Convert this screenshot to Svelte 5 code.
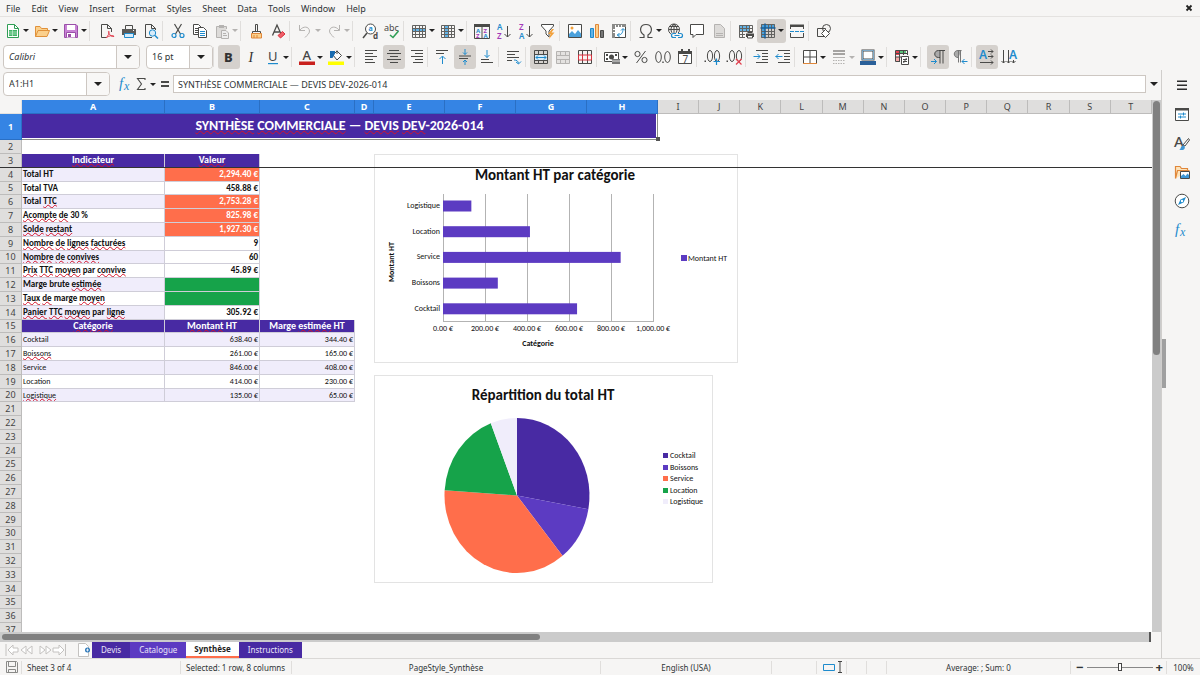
<script>
  const K = '#4a4a48';
  const B = '#1e8bcd';
  const s = (d, c = K, w = 1, f = 'none') => `<path d="${d}" fill="${f}" stroke="${c}" stroke-width="${w}"/>`;
  const f = (d, c = K) => `<path d="${d}" fill="${c}"/>`;
  const t = (x, y, str, size, c = K, extra = '') =>
    `<text x="${x}" y="${y}" font-size="${size}" fill="${c}" ${extra}>${str}</text>`;
  const grid = (c = '#636361') => s('M1.500 2.500H14.500V14.500H1.500ZM1.500 5.500H14.500M1.500 8.500H14.500M1.500 11.500H14.500M4.500 2.500V14.500M8.500 2.500V14.500M11.500 2.500V14.500', c);
  const fx = t(1, 12, 'f', 15, B, 'font-family="Liberation Serif" font-style="italic"') + t(6, 14, 'x', 12, B, 'font-family="Liberation Serif" font-style="italic"');

  const icons = {
    new: s('M2.500 1.500H9.500L13.500 5.500V14.500H2.500Z', '#2f9e55', 1, '#fff') + s('M9.500 1.500V5.500H13.500', '#2f9e55') + f('M4 7H12V13H4Z', '#3fb265') + s('M4 9H12M4 11H12M7.500 7V13', '#c9efd5', 0.700),
    open: s('M1.500 13.500V3.500H6L7.500 5.500H13.500V7.500M1.500 13.500L4 7.500H15.500L13 13.500Z', '#e0913a', 1, '#fbd08c'),
    save: s('M1.500 1.500H13L14.500 3V14.500H1.500Z', '#9a4fa8', 1, '#c882d5') + f('M4 2H12V7H4Z', '#fff') + s('M3.500 14.500V9.500H12.500V14.500', '#9a4fa8', 1, '#fff') + f('M5 11H8V14H5Z', '#9a4fa8'),
    pdf: s('M12.500 9V5.500L8.500 1.500H2.500V14.500H8M8.500 1.500V5.500H12.500') + s('M7 15C9 13 10.500 10 10 8.500C9.500 7.500 9 9 10 10.500C11 12.500 13 14 15 13.500C15 12 10 12.500 7.500 14.500', '#e2404f'),
    print: s('M4.500 6V2.500H11.500V6') + f('M1 6H15V12H12V10H4V12H1Z', '#5a5a58') + s('M3.500 10.500H12.500V14.500H3.500Z', B, 1, '#d8ecfa') + f('M12 7H13V8H12Z', '#fff'),
    preview: s('M12.500 7V5.500L8.500 1.500H2.500V14.500H9M8.500 1.500V5.500H12.500') + `<circle cx="9.500" cy="10" r="3.200" fill="#d8ecfa" stroke="${B}"/>` + s('M12 12.500L15 15.500', B, 1.500),
    cut: s('M4.500 1L10.500 11M11.500 1L5.500 11', K, 1.200) + `<circle cx="4" cy="12.500" r="2" fill="none" stroke="${B}" stroke-width="1.200"/><circle cx="12" cy="12.500" r="2" fill="none" stroke="${B}" stroke-width="1.200"/>`,
    copy: s('M1.500 1.500H6.500L9.500 4.500V11.500H1.500ZM3 5.500H8M3 7.500H8M3 9.500H8', K, 1, '#fff') + s('M6.500 4.500H11.500L14.500 7.500V14.500H6.500Z', K, 1, '#fff') + s('M8 8.500H13M8 10.500H13M8 12.500H13', B),
    paste: s('M9 14.500H2.500V3.500H12.500V6', '#b5b3b1', 1, '#dddbd9') + f('M5 2H10V5H5Z', '#b5b3b1') + s('M7.500 7.500H12L14.500 10V15.500H7.500Z', '#b5b3b1', 1, '#eee') + s('M9 10.500H12M9 12.500H13', '#b5b3b1'),
    clone: s('M7.500 8V1.500H9.500V8M4.500 10.500V8.500H12.500V10.500') + s('M3.500 10.500H13.500V15H3.500ZM6 12V15M9 12V15', '#e0873a', 1, '#fbd08c'),
    clear: s('M2.500 12.500L7 2L11.500 12M4 9H9.500', K, 1.300) + s('M8 12.500L12.500 8.500L15 11L10.500 15Z', '#d8313e', 1, '#f0606a'),
    undo: s('M2.500 2V7.500H8M3 7C6 3 12 3 12.500 8C12.500 11 10 12 8 14.500', '#b5b3b1'),
    redo: s('M13.500 2V7.500H8M13 7C10 3 4 3 3.500 8C3.500 11 6 12 8 14.500', '#b5b3b1'),
    find: `<circle cx="8.500" cy="6" r="5" fill="#fff" stroke="${K}"/>` + s('M5 10L1 15', K, 1.500) + t(6.500, 8, 'a', 7, B, 'font-weight="700"') + t(11, 15.500, 'd', 8, K, 'font-weight="700"'),
    spell: t(0, 7.500, 'abc', 9, K) + s('M6 12L9 14.500L14.500 8', '#2f9e55', 1.600),
    row: f('M1 5H15V9H1Z', '#63b3e6') + grid(),
    col: f('M4 2H9V15H4Z', '#63b3e6') + grid(),
    sort: s('M0.500 1.500H15.500V15.500H0.500ZM8 1.500V15.500') + f('M0 1H16V4H0Z') + t(2, 9.500, 'A', 6, B, 'font-weight="700"') + t(2, 15, 'Z', 6, '#a33ab8', 'font-weight="700"') + t(9.500, 9.500, 'Z', 6, '#a33ab8', 'font-weight="700"') + t(9.500, 15, 'A', 6, B, 'font-weight="700"'),
    asc: t(1, 7, 'A', 8, B, 'font-weight="600"') + t(1, 15.500, 'Z', 8, '#a33ab8', 'font-weight="600"') + s('M11.500 3V14M8.500 11L11.500 14L14.500 11'),
    desc: t(1, 7, 'Z', 8, '#a33ab8', 'font-weight="600"') + t(1, 15.500, 'A', 8, B, 'font-weight="600"') + s('M11.500 3V14M8.500 11L11.500 14L14.500 11'),
    filter: s('M1.500 1.500H13.500V3L9 8V14L6 11V8L1.500 3Z', K, 1, '#fff') + f('M12 6L8 11H10.500L9 16L14.500 9.500H11.500L14 6Z', '#f2a13c'),
    image: s('M1.500 1.500H14.500V14.500H1.500Z', K, 1, '#fff') + f('M2 14V11L5 8L8 11L11 7L14 10.500V14Z', '#4ba1dc') + `<circle cx="5" cy="5" r="1.500" fill="#f2a13c"/>`,
    chart: s('M1.500 5.500H4.500V14.500H1.500Z', B, 1, '#63b3e6') + s('M6.500 1.500H9.500V14.500H6.500Z', '#e0873a', 1, '#fbd08c') + s('M11.500 7.500H14.500V14.500H11.500Z', K, 1, '#777'),
    pivot: s('M1.500 1.500H14.500V14.500H1.500Z', K, 1, '#fff') + f('M1 1H15V4H1ZM1 4H4V15H1Z', '#8a8a88') + s('M4.500 2V4M7.500 2V4M10.500 2V4M2 6.500H4M2 9.500H4', '#fff') + s('M6 12C10 12.500 12 10 12 6M10 7.500L12 5.500L14 7.500M8.500 10L6.500 12L8.500 14', B),
    omega: s('M1.500 14.500H6V12C0.500 8.500 2 1.500 8 1.500S15.500 8.500 10 12V14.500H14.500', K, 1.200),
    link: `<circle cx="7" cy="6.500" r="5.500" fill="none" stroke="${K}"/>` + s('M7 1C3 4 3 9 7 12C11 9 11 4 7 1ZM1.500 6.500H12.500M2.500 3.500H11.500M7 1V12') + f('M4 10H16V16H4Z', '#f6f5f4') + s('M9 10.500H6.500Q4.500 10.500 4.500 12.500T6.500 14.500H9M11 10.500H13.500Q15.500 10.500 15.500 12.500T13.500 14.500H11M7.500 12.500H12.500', B, 1.200),
    comment: s('M1.500 1.500H14.500V11.500H7L4 14.500V11.500H1.500Z', K, 1, '#fff'),
    foot: s('M3.500 1.500H9.500L13.500 5.500V14.500H3.500Z', '#b5b3b1', 1, '#dddbd9') + s('M5 10.500H12M5 12.500H12', '#b5b3b1'),
    printarea: f('M1 2H11V8H1Z', '#63b3e6') + grid() + f('M7 9H16V16H7Z', '#f6f5f4') + f('M8 10.500H16V14H8ZM9.500 8.500H14.500V10H9.500Z') + s('M9.500 12.500H14.500V15H9.500Z', K, 1, '#fff'),
    freeze: f('M1 1H5V15H1ZM1 1H15V5H1Z', '#4ba1dc') + s('M1.500 1.500H14.500V14.500H1.500ZM1.500 8.500H14.500M1.500 11.500H14.500M8.500 1.500V14.500M11.500 1.500V14.500', '#636361') + s('M0.500 5H15.500M5 0.500V15.500', '#1a5f96', 1.500),
    split: s('M1.500 6V2.500H14.500V6M1.500 10V14.500H14.500V10') + f('M1 1.500H15V4H1Z') + `<path d="M1 8.500H15" stroke="${B}" stroke-dasharray="4 1"/>`,
    shapes: s('M1.500 5.500H9.500V13.500H1.500Z') + `<circle cx="10.500" cy="5.500" r="4" fill="none" stroke="${K}"/>` + s('M9.500 6.500L13.500 10.500L9.500 14.500L5.500 10.500Z', K, 1, '#fff'),
    bold: t(3, 13, 'B', 13, '#333', 'font-weight="800"'),
    italic: t(5.500, 13, 'I', 14, '#333', 'font-family="Liberation Serif" font-style="italic"'),
    under: t(3, 12, 'U', 13, '#444') + f('M3 14H13V15.200H3Z', B),
    color: t(3.500, 11, 'A', 13, '#444', 'font-weight="500"') + f('M0 12.500H16V16H0Z', '#c9211e'),
    hilite: f('M0 12.500H16V16H0Z', '#ffff00') + s('M5 6L9 2L13.500 6.500L9 11Z', K, 1, '#fff') + s('M9 5V1.500') + f('M2 2H7V4.500L4.500 9H2Z', '#1b6cb0'),
    left: s('M1 1.500H13M1 4.500H9M1 7.500H13M1 10.500H9M1 13.500H11'),
    center: s('M3 1.500H13M1 4.500H15M4 7.500H12M1 10.500H15M4 13.500H12'),
    right: s('M3 1.500H15M7 4.500H15M3 7.500H15M7 10.500H15M5 13.500H15'),
    top: s('M1 1.500H13M1 4.500H9') + s('M7.500 15V7.500M4.500 10L7.500 7L10.500 10', B),
    middle: s('M2 7H14M2 9.500H11') + s('M8 0V5.500M6 3.500L8 5.500L10 3.500M8 16V11M6 13L8 11L10 13', B),
    bottom: s('M2 10.500H10M2 13.500H14') + s('M8 1V8.500M5.500 6L8 8.500L10.500 6', B),
    wrap: s('M1 2.500H13M1 5.500H9M1 8.500H13M1 11.500H6') + s('M8 11C11 11 12 12 12.500 14.500M10 13L12.500 15L15 12.500', B),
    merge: f('M1 6H15V11H1Z', '#d7ecfa') + s('M1.500 1.500H14.500V14.500H1.500ZM1.500 5.500H14.500M1.500 11.500H14.500M5.500 1.500V5.500M10.500 1.500V5.500M5.500 11.500V14.500M10.500 11.500V14.500') + s('M3 8.500H13M5 6.500L3 8.500L5 10.500M11 6.500L13 8.500L11 10.500', B),
    mergeoff: s('M1.500 2.500H14.500V14.500H1.500ZM1.500 6.500H14.500M1.500 10.500H14.500M5.500 2.500V6.500M10.500 2.500V6.500M5.500 10.500V14.500M10.500 10.500V14.500', '#b5b3b1', 1, '#e4e2e0'),
    unmerge: s('M1.500 1.500H14.500V14.500H1.500ZM5.500 1.500V6M10.500 1.500V6M5.500 11V14.500M10.500 11V14.500') + s('M1.500 6H14.500V11H1.500ZM5.500 6V11M10.500 6V11', '#d8313e'),
    currency: s('M0.500 3.500H14.500V12.500H0.500Z', K, 1, '#fff') + f('M2 5H4V7H2ZM11 5H13V7H11ZM2 9H4V11H2Z') + `<circle cx="7.500" cy="8" r="2.500" fill="${K}"/>` + f('M8 10H16V15H8Z', '#777') + s('M8 12H16', '#ddd'),
    percent: `<circle cx="4.500" cy="5" r="2.600" fill="none" stroke="${K}"/><circle cx="11.500" cy="11" r="2.600" fill="none" stroke="${K}"/>` + s('M12.500 2L3.500 14'),
    number: `<ellipse cx="3.500" cy="8" rx="2.800" ry="5.500" fill="none" stroke="${K}"/><ellipse cx="12.500" cy="8" rx="2.800" ry="5.500" fill="none" stroke="${K}"/>` + f('M7.300 12.500H8.700V14H7.300Z'),
    date: s('M1.500 2.500H14.500V14.500H1.500Z', K, 1, '#fff') + f('M1 2H15V5H1ZM4 0H6V4H4ZM11 0H13V4H11Z') + t(5.500, 13.500, '7', 10, K),
    decadd: `<ellipse cx="6" cy="7" rx="2.600" ry="5.500" fill="none" stroke="${K}"/><ellipse cx="13" cy="7" rx="2.600" ry="5.500" fill="none" stroke="${K}"/>` + f('M0.500 11.500H2V13H0.500Z') + s('M12.500 9.500V16M9.500 12.500H16', B, 1.200),
    decdel: `<ellipse cx="6" cy="7" rx="2.600" ry="5.500" fill="none" stroke="${K}"/><ellipse cx="13" cy="7" rx="2.600" ry="5.500" fill="none" stroke="${K}"/>` + f('M0.500 11.500H2V13H0.500Z') + s('M10 10L15.500 15.500M15.500 10L10 15.500', '#e2404f', 1.200),
    indent: s('M3 1.500H15M9 4.500H15M9 7.500H15M9 10.500H15M3 13.500H15') + s('M0.500 7.500H7M4.500 5L7 7.500L4.500 10', B),
    outdent: s('M3 1.500H15M9 4.500H15M9 7.500H15M9 10.500H15M3 13.500H15') + s('M0.500 7.500H7.500M3.500 5L1 7.500L3.500 10', B),
    border: s('M1.500 14V1.500H14.500V14M8 1.500V14M1.500 8H14.500', K, 1, '#fff') + s('M1 14.500H15', '#e0873a'),
    lines: s('M2 2H14M2 5H14', '#a5a3a1', 2) + s('M2 8.500H14', '#b5b3b1') + `<path d="M2 11.500H14M2 14.500H14" stroke="#b5b3b1" stroke-dasharray="1.500 1"/>`,
    bordercolor: s('M2.500 1.500H13.500V10.500H2.500Z', K, 2, '#fff') + s('M2.500 1.500H13.500V10.500H2.500Z', '#8cc3ea', 0.800) + f('M0 12H16V16H0Z', '#2a6099'),
    cond: f('M1 2H5V6H1Z', '#e2404f') + f('M5 2H12V5H5Z', '#5cc27a') + f('M1 8H5V12H1Z', '#f5a9a9') + s('M1.500 1.500H13.500V6M1.500 1.500V12.500H6M1.500 4.500H13.500M1.500 8H7M5.500 1.500V12M9.500 1.500V6') + s('M7.500 7.500H14.500V15.500H7.500Z', K, 1, '#fff') + s('M9 10.500H13M9 12.500H13M12.500 9L9.500 14'),
    ltr: f('M10 1.500H8.500C3 1.500 3 8.500 8.500 8.500H10Z', '#aaa') + s('M15 1.500H8.500C3.500 1.500 3.500 8.500 8.500 8.500H10M10 1.500V14.500M13 1.500V14.500') + s('M1 12.500H6.500M4 10L6.500 12.500L4 15', B),
    rtl: s('M9.500 1.500H6C1 1.500 1 8.500 6 8.500H6.500M6.500 1.500V13.500M8.500 1.500V13.500', '#777', 1, '#aaa') + s('M10 12.500H15.500M12.500 10L10 12.500L12.500 15', B),
    dirh: t(0, 10, 'A', 12, B, 'font-weight="600"') + s('M9 2.500H14M12 0.500L14 2.500L12 4.500M9 7.500H14M12 5.500L14 7.500L12 9.500M1 13.500H14M12 11.500L14 13.500L12 15.500'),
    dirv: t(8, 10, 'A', 12, B, 'font-weight="600"') + s('M2.500 1V14M0.500 12L2.500 14L4.500 12M7.500 1V14M5.500 12L7.500 14L9.500 12M12.500 11V14M10.500 12L12.500 14L14.500 12'),
    fx,
    sum: s('M11 4V2.500H3.500L7.500 8L3.500 13.500H11V12', K, 1.100),
    eq: f('M4 5H12V7H4ZM4 9H12V11H4Z'),
    menu: f('M3 3.500H13V5H3ZM3 7.500H13V9H3ZM3 11.500H13V13H3Z', '#2e2e2e'),
    props: s('M1.500 2.500H14.500V14.500H1.500Z', K, 1, '#fff') + f('M1 2H15V4.500H1Z') + s('M4 8H12M4 11H12M9.500 6.500V9.500M6.500 9.500V12.500', B),
    styles: t(0, 12, 'A', 15, K, 'font-weight="500"') + s('M9 10L14.500 3.500L15.500 5L11 11Z', K, 1, '#fff') + f('M5 15C7 15 6.500 10.500 9 10.500S11.500 14 9 15Z', '#3f97d6'),
    gallery: s('M1.500 14.500V2.500H6L7.500 4.500H13.500V7M1.500 14.500L3.500 6.500H15.500', '#e0873a', 1.200, '#fde3bb') + s('M6.500 7.500H15.500V14.500H6.500Z', K, 1, '#fff') + f('M7 14V12L9.500 10L11.500 12L13.500 9.500L15 11V14Z', '#3f97d6'),
    nav: `<circle cx="8" cy="8" r="6.800" fill="#fff" stroke="${K}"/>` + f('M12 4L9.500 9.500L4 12L6.500 6.500Z', B) + `<circle cx="8" cy="8" r="1.200" fill="#fff"/>`
  };

  const SEP = { sep: 'sep' };
  const WIDE = { sep: 'sep wide' };
  const i = (name, label, o = {}) => ({ name, label, ...o });
  const dd = { drop: true };
  const bar1 = [
    i('new', 'New', dd), i('open', 'Open', dd), i('save', 'Save', dd), WIDE,
    i('pdf', 'Export as PDF'), i('print', 'Print'), i('preview', 'Print Preview'), SEP,
    i('cut', 'Cut'), i('copy', 'Copy'), i('paste', 'Paste', { drop: true, off: true }), SEP,
    i('clone', 'Clone Formatting'), i('clear', 'Clear Formatting'), SEP,
    i('undo', 'Undo', { drop: true, off: true }), i('redo', 'Redo', { drop: true, off: true }), WIDE,
    i('find', 'Find and Replace'), i('spell', 'Spelling'), SEP,
    i('row', 'Row', dd), i('col', 'Column', dd), SEP,
    i('sort', 'Sort'), i('asc', 'Sort Ascending'), i('desc', 'Sort Descending'), i('filter', 'AutoFilter'), SEP,
    i('image', 'Insert Image'), i('chart', 'Insert Chart'), i('pivot', 'Pivot Table'), SEP,
    i('omega', 'Special Character', dd), i('link', 'Insert Hyperlink'), i('comment', 'Insert Comment'), i('foot', 'Headers and Footers', { off: true }), SEP,
    i('printarea', 'Define Print Area'), i('freeze', 'Freeze Rows and Columns', { drop: true, on: true }), i('split', 'Split Window'), SEP,
    i('shapes', 'Show Draw Functions')
  ];
  const bar2 = [
    i('bold', 'Bold', { on: true }), i('italic', 'Italic'), i('under', 'Underline', dd), SEP,
    i('color', 'Font Color', dd), i('hilite', 'Highlighting', dd), WIDE,
    i('left', 'Align Left'), i('center', 'Center Horizontally', { on: true }), i('right', 'Align Right'), SEP,
    i('top', 'Align Top'), i('middle', 'Center Vertically', { on: true }), i('bottom', 'Align Bottom'), SEP,
    i('wrap', 'Wrap Text'), SEP,
    i('merge', 'Merge and Center', { on: true }), i('mergeoff', 'Merge Cells', { off: true }), i('unmerge', 'Unmerge Cells'), SEP,
    i('currency', 'Currency', dd), i('percent', 'Percent'), i('number', 'Number'), i('date', 'Date'), SEP,
    i('decadd', 'Add Decimal Place'), i('decdel', 'Delete Decimal Place'), SEP,
    i('indent', 'Increase Indent'), i('outdent', 'Decrease Indent'), SEP,
    i('border', 'Borders', dd), i('lines', 'Border Style', { drop: true, off: true }), i('bordercolor', 'Border Color', dd), SEP,
    i('cond', 'Conditional', dd), WIDE,
    i('ltr', 'Left-To-Right', { on: true }), i('rtl', 'Right-To-Left'), SEP,
    i('dirh', 'Text Left to Right', { on: true }), i('dirv', 'Text Top to Bottom')
  ];

  const menus = ['File', 'Edit', 'View', 'Insert', 'Format', 'Styles', 'Sheet', 'Data', 'Tools', 'Window', 'Help'];
  const side = [['menu', 'Sidebar Settings'], ['props', 'Properties'], ['styles', 'Styles'], ['gallery', 'Gallery'], ['nav', 'Navigator'], ['fx', 'Functions']];
  const letters = 'ABCDEFGHIJKLMNOPQRST'.split('');

  // Words wrapped in underscores carry the spell-check underline.
  const mark = (str) => str.split('_').map((text, n) => ({ text, bad: n % 2 === 1 }));
  const rows = [
    { n: 3, kind: 'head', cells: ['_Indicateur_', '_Valeur_'] },
    { n: 4, kind: 'kpi', cells: ['Total HT', '2,294.40 €'], fill: 'orange' },
    { n: 5, kind: 'kpi', cells: ['Total TVA', '458.88 €'] },
    { n: 6, kind: 'kpi', cells: ['Total _TTC_', '2,753.28 €'], fill: 'orange' },
    { n: 7, kind: 'kpi', cells: ['_Acompte_ _de_ 30 %', '825.98 €'], fill: 'orange' },
    { n: 8, kind: 'kpi', cells: ['_Solde_ _restant_', '1,927.30 €'], fill: 'orange' },
    { n: 9, kind: 'kpi', cells: ['_Nombre_ _de_ _lignes_ _facturées_', '9'] },
    { n: 10, kind: 'kpi', cells: ['_Nombre_ _de_ _convives_', '60'] },
    { n: 11, kind: 'kpi', cells: ['_Prix_ _TTC_ _moyen_ par _convive_', '45.89 €'] },
    { n: 12, kind: 'kpi', cells: ['Marge brute _estimée_', ''], fill: 'green' },
    { n: 13, kind: 'kpi', cells: ['_Taux_ _de_ marge _moyen_', ''], fill: 'green' },
    { n: 14, kind: 'kpi', cells: ['_Panier_ _TTC_ _moyen_ par _ligne_', '305.92 €'] },
    { n: 15, kind: 'head', cells: ['_Catégorie_', '_Montant_ HT', 'Marge _estimée_ HT'] },
    { n: 16, kind: 'cat', cells: ['Cocktail', '638.40 €', '344.40 €'] },
    { n: 17, kind: 'cat', cells: ['_Boissons_', '261.00 €', '165.00 €'] },
    { n: 18, kind: 'cat', cells: ['Service', '846.00 €', '408.00 €'] },
    { n: 19, kind: 'cat', cells: ['Location', '414.00 €', '230.00 €'] },
    { n: 20, kind: 'cat', cells: ['_Logistique_', '135.00 €', '65.00 €'] },
    ...Array.from({ length: 17 }, (_, k) => ({ n: 21 + k, kind: 'blank', cells: [] }))
  ];

  const data = [
    { name: 'Cocktail', v: 638.4, c: '#482aa3' },
    { name: 'Boissons', v: 261, c: '#5c3bc2' },
    { name: 'Service', v: 846, c: '#ff6e4b' },
    { name: 'Location', v: 414, c: '#16a34a' },
    { name: 'Logistique', v: 135, c: '#f0edfb' }
  ];
  const total = data.reduce((a, d) => a + d.v, 0);
  const pt = (a) => `${143 + 72.5 * Math.sin(a)} ${120.5 - 77.5 * Math.cos(a)}`;
  let acc = 0;
  const slices = data.map((d) => {
    const a = (acc / total) * 2 * Math.PI;
    acc += d.v;
    const b = (acc / total) * 2 * Math.PI;
    return { c: d.c, d: `M143 120.500L${pt(a)}A72.500 77.500 0 ${b - a > Math.PI ? 1 : 0} 1 ${pt(b)}Z` };
  });
  const bars = [...data].reverse();
  const ticks = ['0.00 €', '200.00 €', '400.00 €', '600.00 €', '800.00 €', '1,000.00 €'];

  let font = $state('Calibri');
  let size = $state('16 pt');
  let ref = $state('A1:H1');
  let formula = $state('SYNTHÈSE COMMERCIALE — DEVIS DEV-2026-014');
  let zoom = $state(50);
</script>

{#snippet icon(name)}
  <svg class="ico" viewBox="0 0 16 16" aria-hidden="true">{@html icons[name]}</svg>
{/snippet}

{#snippet tools(items)}
  {#each items as it}
    {#if it.sep}
      <span class={it.sep}></span>
    {:else}
      <button class="tool" class:drop={it.drop} class:on={it.on} disabled={it.off} aria-label={it.label} aria-pressed={it.on}>
        {@render icon(it.name)}
        {#if it.drop}<i class="caret"></i>{/if}
      </button>
    {/if}
  {/each}
{/snippet}

{#snippet words(str)}
  {#each mark(str) as w}{#if w.bad}<span class="bad">{w.text}</span>{:else}{w.text}{/if}{/each}
{/snippet}

<div class="app">
  <nav class="menubar">
    {#each menus as m}<button>{m}</button>{/each}
    <button class="close" aria-label="Close document">
      <svg viewBox="0 0 8 8" width="8" height="8"><path d="M1.500 1.500L6.500 6.500M6.500 1.500L1.500 6.500" stroke="#222" stroke-width="1.800" /></svg>
    </button>
  </nav>

  <div class="toolbar first">{@render tools(bar1)}</div>
  <div class="toolbar">
    <div class="combo font">
      <input aria-label="Font name" bind:value={font} /><button aria-label="Font list"><i class="caret big"></i></button>
    </div>
    <div class="combo size">
      <input aria-label="Font size" bind:value={size} /><button aria-label="Size list"><i class="caret big"></i></button>
    </div>
    <span class="sep"></span>
    {@render tools(bar2)}
  </div>

  <div class="body">
    <div class="work">
      <div class="formula">
        <div class="combo ref">
          <input aria-label="Name box" bind:value={ref} /><button aria-label="Range list"><i class="caret big"></i></button>
        </div>
        <button class="tool small" aria-label="Function Wizard">{@render icon('fx')}</button>
        <button class="tool small pair" aria-label="Select Function">{@render icon('sum')}<i class="caret"></i></button>
        <button class="tool small" aria-label="Formula">{@render icon('eq')}</button>
        <input class="line" aria-label="Input line" bind:value={formula} />
        <button class="expand" aria-label="Expand formula bar"><i class="caret big"></i></button>
      </div>

      <div class="pane">
        <div class="sheet">
          <table>
            <colgroup>
              <col class="cn" /><col class="ca" /><col class="cb" /><col class="cb" /><col class="cd" />
              <col class="ce" /><col class="ce" /><col class="ce" /><col class="ce" />
              {#each Array(12) as _}<col />{/each}
            </colgroup>
            <thead>
              <tr>
                <th class="corner" aria-label="Select all"></th>
                {#each letters as l, n}<th scope="col" class:sel={n < 8}>{l}</th>{/each}
              </tr>
            </thead>
            <tbody>
              <tr class="r1">
                <th scope="row" class="sel">1</th>
                <td colspan="8" class="title">
                  <span class="bad">SYNTHÈSE</span> <span class="bad">COMMERCIALE</span> — <span class="bad">DEVIS</span> <span class="bad">DEV</span>-2026-014
                  <i class="grip"></i>
                </td>
                <td colspan="12"></td>
              </tr>
              <tr><th scope="row">2</th><td colspan="20"></td></tr>
              {#each rows as r}
                <tr class={r.kind} class:tint={r.n % 2 === 0}>
                  <th scope="row">{r.n}</th>
                  {#each r.cells as c, n}
                    <td class={n === 1 && r.fill ? r.fill : ''}>{@render words(c)}</td>
                  {/each}
                  <td class="rest" colspan={20 - r.cells.length}></td>
                </tr>
              {/each}
            </tbody>
          </table>

          <svg class="chart bar" width="365" height="210" viewBox="0 0 365 210">
            <rect x="0.500" y="0.500" width="363" height="208" fill="#fff" stroke="#e3e3e3" />
            <text class="ct" x="181" y="26">Montant HT par catégorie</text>
            {#each ticks as k, n}
              <path d="M{69 + 42 * n}.5 40V167" stroke="#b3b3b3" />
              <text class="mid" x={69 + 42 * n} y="177">{k}</text>
            {/each}
            <path d="M69 167.500H280" stroke="#b3b3b3" />
            {#each bars as b, n}
              <rect x="69" y={46.5 + 25.7 * n} width={b.v * 0.21} height="11" fill="#5c3bc2" />
              <text class="end" x="66" y={54 + Math.round(25.7 * n)}>{b.name}</text>
            {/each}
            <text class="mid strong" x="164" y="192">Catégorie</text>
            <text class="mid strong" transform="translate(20 108) rotate(-90)">Montant HT</text>
            <rect x="307" y="101" width="6" height="6" fill="#5c3bc2" />
            <text x="314" y="107">Montant HT</text>
          </svg>

          <svg class="chart pie" width="340" height="209" viewBox="0 0 340 209">
            <rect x="0.500" y="0.500" width="338" height="207" fill="#fff" stroke="#e3e3e3" />
            <text class="ct" x="169" y="25">Répartition du total HT</text>
            {#each slices as p}<path d={p.d} fill={p.c} />{/each}
            {#each data as d, n}
              <rect x="289" y={78 + Math.round(11.5 * n)} width="5" height="5" fill={d.c} />
              <text x="296" y={83 + Math.round(11.5 * n)}>{d.name}</text>
            {/each}
          </svg>
          <div class="freeze"></div>
        </div>
        <div class="vscroll"><i></i></div>
      </div>

      <div class="hscroll"><i></i></div>

      <div class="tabs">
        <svg class="nav" width="62" height="14" viewBox="0 0 62 14" fill="#fff" stroke="#c4c2c0">
          <path d="M1 1V13M3 7L8 2V5H13V9H8V12ZM16 7L21 3V11ZM22 7L27 3V11ZM40 7L35 3V11ZM46 7L41 3V11ZM59 7L54 2V5H48V9H54V12ZM60.500 1V13" />
        </svg>
        <button class="add" aria-label="Add sheet">
          <svg width="14" height="14" viewBox="0 0 14 14"><path d="M1.500 0.500H8.500L11.500 3.500V13.500H1.500Z" fill="#fff" stroke="#c4c2c0" /><circle cx="10.500" cy="7" r="2.500" fill="#2a76b8" /><path d="M9 7H12M10.500 5.500V8.500" stroke="#fff" stroke-width="0.800" /></svg>
        </button>
        <button class="tab">Devis</button>
        <button class="tab alt">Catalogue</button>
        <button class="tab current">Synthèse</button>
        <button class="tab">Instructions</button>
      </div>
    </div>

    <aside>
      <i class="handle"></i>
      {#each side as [name, label]}<button aria-label={label}>{@render icon(name)}</button>{/each}
    </aside>
  </div>

  <footer>
    <span class="f-save">
      <svg width="12" height="12" viewBox="0 0 12 12" fill="none" stroke="#8a8a88"><path d="M0.500 0.500H10.500L11.500 1.500V11.500H0.500ZM2.500 0.500V5.500H9.500V0.500M2.500 11.500V8.500H9.500V11.500" /></svg>
    </span>
    <span class="f-sheet">Sheet 3 of 4</span>
    <span class="f-sel">Selected: 1 row, 8 columns</span>
    <span class="f-mid">PageStyle_Synthèse</span>
    <span class="f-lang">English (USA)</span>
    <span class="f-ins"></span>
    <span class="f-mode">
      <svg width="20" height="12" viewBox="0 0 20 12" fill="none"><path d="M0.500 3.500H11.500V9.500H0.500Z" stroke="#1e8bcd" /><path d="M15 0.500H19M15 11.500H19M17 0.500V11.500" stroke="#444" /></svg>
    </span>
    <span class="f-cell"></span>
    <span class="f-cell"></span>
    <span class="f-sum">Average: ; Sum: 0</span>
    <span class="f-zoom">
      <button aria-label="Zoom out">−</button>
      <input type="range" aria-label="Zoom" bind:value={zoom} />
      <button aria-label="Zoom in">+</button>
    </span>
    <span class="f-pct">100%</span>
  </footer>
</div>

<style>
  :global(body) { margin: 0; }
  * { box-sizing: border-box; }
  .app {
    display: flex; flex-direction: column; height: 100vh; overflow: hidden;
    background: #f6f5f4; color: #2e3436; font: 9px/12px "Noto Sans", sans-serif;
  }
  button, input { font: inherit; color: inherit; margin: 0; padding: 0; border: 0; background: none; min-width: 0; }
  .menubar { display: flex; align-items: center; gap: 1px; height: 17px; flex: none; padding: 1px 2px 0 1px; border-bottom: 1px solid #e4e2e0; }
  .menubar button { padding: 0 5px; }
  .menubar button.close { margin-left: auto; line-height: 8px; }
  .toolbar { display: flex; align-items: center; height: 26px; flex: none; padding-left: 3px; }
  .toolbar.first { height: 27px; padding-left: 2px; }
  .tool {
    display: flex; align-items: center; flex: none; width: 22px; height: 24px;
    padding-left: 3px; border-radius: 3px;
  }
  .tool.drop { width: 29px; gap: 2px; }
  .tool.on { background: #d5d1cd; }
  .tool.small { width: 16px; padding-left: 0; }
  .tool.pair { width: 23px; }
  .ico { width: 16px; height: 16px; flex: none; overflow: visible; font-family: "Noto Sans", sans-serif; }
  .caret { border: solid transparent; border-width: 3px 3px 0; border-top-color: #222; width: 0; flex: none; }
  .caret.big { border-width: 4px 4px 0; }
  .tool:disabled .caret { border-top-color: #b5b3b1; }
  .sep { flex: none; width: 5px; height: 20px; border-left: 1px solid #e0dedc; }
  .sep.wide { width: 7px; }
  .combo { display: flex; height: 24px; border: 1px solid #cdc7c2; border-radius: 4px; background: #fff; overflow: hidden; flex: none; }
  .combo input { flex: 1; padding-left: 5px; }
  .combo button { width: 23px; border-left: 1px solid #cdc7c2; display: grid; place-items: center; background: #f8f7f6; }
  .font { width: 137px; margin-right: 6px; }
  .font input { font-style: italic; }
  .size { width: 67px; }

  .body { display: flex; flex: 1; min-height: 0; }
  .work { display: flex; flex-direction: column; flex: 1; min-width: 0; }
  .formula { display: flex; align-items: center; height: 28px; flex: none; padding-left: 3px; margin-bottom: 2px; }
  .ref { width: 107px; margin-right: 8px; }
  .formula .line { flex: 1; height: 18px; border: 1px solid #cdc7c2; background: #fff; padding-left: 4px; }
  .expand { width: 15px; height: 18px; display: grid; place-items: center; }

  .pane { display: flex; flex: 1; min-height: 0; }
  .sheet { position: relative; flex: 1; min-width: 0; overflow: hidden; background: #fff; }
  table { width: 100%; table-layout: fixed; border-collapse: separate; border-spacing: 0; }
  .cn { width: 22px; } .ca { width: 143px; } .cb { width: 95px; } .cd { width: 19px; } .ce { width: 71px; }
  tr { height: 14px; }
  tbody tr:nth-child(5n) { height: 13px; }
  th, td { padding: 0; overflow: hidden; white-space: nowrap; line-height: 12px; }
  th { background: #dfdedd; font-weight: 400; color: #444; border: solid #bdbcbb; border-width: 0 1px 1px 0; font-size: 9px; }
  thead th.corner { background: #f6f5f4; border-color: #e4e2e0; }
  th.sel { background: #3584e4; color: #fff; font-weight: 700; border-color: #2a6fc4; }
  tr.r1 { height: 26px; }
  td { font-family: Carlito, Lato, sans-serif; font-size: 8px; color: #111; vertical-align: top; }
  td.title {
    position: relative; overflow: visible; background: #482aa3; color: #fff; text-align: center;
    font-size: 14px; font-weight: 700; line-height: 24px;
    border: solid #8a8a88; border-width: 0 1px 1px 0; box-shadow: inset -1px -1px #fff;
  }
  .grip { position: absolute; right: -3px; bottom: -2px; width: 4px; height: 4px; background: #555; }
  .bad { text-decoration: underline wavy #d3122a 1px; text-decoration-skip-ink: none; text-underline-offset: 0; }
  .head td, .kpi td, .cat td { border: solid #cfcdd8; border-width: 0 1px 1px 0; padding: 0 1px; text-align: right; }
  .head td:nth-child(2), .kpi td:nth-child(2), .cat td:nth-child(2) { text-align: left; }
  .head td, .head td:nth-child(2) { background: #482aa3; color: #fff; font-weight: 700; font-size: 10px; text-align: center; }
  .kpi td { font-weight: 700; font-size: 9px; }
  .tint td { background: #f0edfb; }
  .kpi td:nth-child(3) { background: #fff; }
  .kpi td.orange { background: #ff6e4b; color: #fff; }
  .kpi td.green { background: #16a34a; }
  .sheet td.rest { background: none; border: 0; }
  .chart { position: absolute; left: 374px; font-family: Carlito, Lato, sans-serif; font-size: 8px; fill: #111; }
  .bar { top: 54px; }
  .pie { top: 275px; }
  .ct { font-size: 15px; font-weight: 700; text-anchor: middle; }
  .mid { text-anchor: middle; }
  .end { text-anchor: end; }
  .strong { font-weight: 700; }
  .freeze { position: absolute; left: 0; right: 0; top: 67px; height: 1px; background: #333; }
  .vscroll { width: 9px; flex: none; background: #cbcbcb; padding: 1px; }
  .vscroll i { display: block; height: 48%; border-radius: 4px; background: #808080; }
  .hscroll { height: 10px; flex: none; background: #cbcbcb; margin-right: 10px; padding: 2px; border-right: 2px solid #555; }
  .hscroll i { display: block; width: 47%; height: 6px; border-radius: 3px; background: #808080; }

  .tabs { display: flex; align-items: center; height: 16px; flex: none; padding-left: 5px; font-size: 8px; }
  .nav { flex: none; }
  .add { width: 25px; padding-left: 8px; height: 14px; }
  .tab { height: 16px; padding: 0 9px; background: #482aa3; color: #eae6f8; }
  .tab.alt { background: #5c3bc2; }
  .tab.current { background: #fff; color: #222; font-weight: 700; border-bottom: 2px solid #ff6e4b; padding: 0 8px; }

  aside { position: relative; width: 39px; flex: none; border-left: 1px solid #d0cecc; display: flex; flex-direction: column; align-items: center; padding-left: 1px; }
  aside button { height: 29px; display: grid; place-items: center; }
  .handle { position: absolute; left: 0; top: 269px; width: 4px; height: 49px; background: #a0a0a0; }

  footer { display: flex; align-items: center; height: 17px; flex: none; border-top: 1px solid #dad8d6; font-size: 8px; }
  footer span { height: 13px; line-height: 13px; border-right: 1px solid #e0dedc; flex: none; }
  .f-save { width: 22px; padding-left: 6px; }
  footer .f-sheet { width: 159px; padding-left: 5px; }
  footer .f-sel { width: 111px; padding-left: 5px; }
  footer .f-mid { width: 309px; text-align: center; }
  footer .f-lang { width: 171px; text-align: center; }
  footer .f-ins { width: 45px; }
  footer .f-mode { width: 30px; padding-left: 6px; }
  footer .f-cell { width: 20px; }
  footer .f-sum { flex: 1; text-align: center; }
  footer .f-zoom { display: flex; align-items: center; gap: 3px; width: 96px; padding-left: 5px; }
  footer .f-zoom button { font-size: 13px; font-weight: 700; }
  footer .f-pct { width: 33px; text-align: center; border: 0; }
  input[type='range'] { appearance: none; width: 66px; height: 9px; background: linear-gradient(#888, #888) center / 100% 1px no-repeat; }
  input[type='range']::-webkit-slider-thumb { appearance: none; width: 4px; height: 8px; border: 1px solid #444; background: #fff; }
</style>
